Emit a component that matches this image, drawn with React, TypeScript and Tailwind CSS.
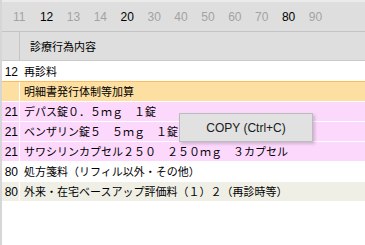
const tabs = [
  { n: '11', on: false },
  { n: '12', on: true },
  { n: '13', on: false },
  { n: '14', on: false },
  { n: '20', on: true },
  { n: '30', on: false },
  { n: '40', on: false },
  { n: '50', on: false },
  { n: '60', on: false },
  { n: '70', on: false },
  { n: '80', on: true },
  { n: '90', on: false },
];

type Row = { no: string; text: string; kind: 'plain' | 'sub' | 'drug' | 'fee' };

const rows: Row[] = [
  { no: '12', text: '再診料', kind: 'plain' },
  { no: '', text: '明細書発行体制等加算', kind: 'sub' },
  { no: '21', text: 'デパス錠０．５ｍｇ　１錠', kind: 'drug' },
  { no: '21', text: 'ベンザリン錠５　５ｍｇ　１錠', kind: 'drug' },
  { no: '21', text: 'サワシリンカプセル２５０　２５０ｍｇ　３カプセル', kind: 'drug' },
  { no: '80', text: '処方箋料（リフィル以外・その他）', kind: 'plain' },
  { no: '80', text: '外来・在宅ベースアップ評価料（１）２（再診時等）', kind: 'fee' },
];

const rowStyle = {
  plain: 'bg-white border-white',
  sub: 'bg-[#fedfa2] border-[#fdbb5c]',
  drug: 'bg-[#fdd8fd] border-white',
  fee: 'bg-[#efefe6] border-white',
};

function TabBar() {
  return (
    <div className="h-[32px] flex items-center pl-[11px] bg-[#dedede] border-t-2 border-t-[#ebebeb] border-b border-b-[#c4c4c4]">
      {tabs.map((t) => (
        <span
          key={t.n}
          className={`w-[26.9px] shrink-0 text-[12px] ${t.on ? 'text-black' : 'text-[#a3a3a3]'}`}
        >
          {t.n}
        </span>
      ))}
    </div>
  );
}

function Header() {
  return (
    <div className="h-[29px] flex bg-[#dedede] border-b border-[#cbcbcb]">
      <div className="w-[18px] border-r border-[#c4c4c4]" />
      <div className="flex items-center pl-[10px] text-[11px] text-black font-['Noto_Sans_CJK_JP',sans-serif]">
        診療行為内容
      </div>
    </div>
  );
}

export default function App() {
  return (
    <div className="relative w-[365px] h-[245px] overflow-hidden bg-white border-l-2 border-[#d6d6d6] font-['Liberation_Sans',Arial,sans-serif]">
      <TabBar />
      <Header />
      <div>
        {rows.map((r, i) => (
          <div key={i} className={`h-[20px] flex border-t ${rowStyle[r.kind]}`}>
            <div className="w-[18px] border-r border-white flex items-center justify-end pr-[1px] text-[12px] text-black">
              {r.no}
            </div>
            <div className="flex items-center pl-[4px] text-[11px] text-black whitespace-nowrap font-['Noto_Sans_CJK_JP',sans-serif]">
              {r.text}
            </div>
          </div>
        ))}
      </div>

      <div className="absolute left-[177px] top-[113px] w-[134px] h-[29px] flex items-center justify-center bg-[#e1e1e1] border border-[#bcbcbc] shadow-[2px_2px_3px_rgba(0,0,0,0.18)] text-[12px] text-[#1a1a1a]">
        COPY (Ctrl+C)
      </div>
    </div>
  );
}
